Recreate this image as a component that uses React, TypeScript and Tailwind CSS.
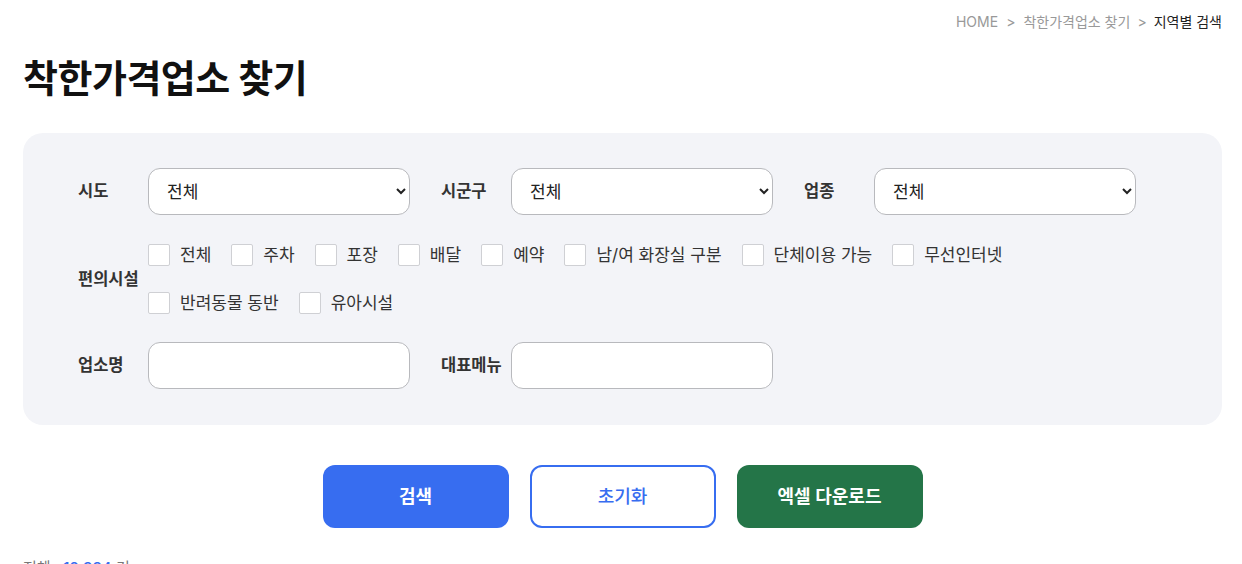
import React from 'react';

const row1 = ['전체', '주차', '포장', '배달', '예약', '남/여 화장실 구분', '단체이용 가능', '무선인터넷'];
const row2 = ['반려동물 동반', '유아시설'];

function Check({ label }: { label: string }) {
    return (
        <label className="flex items-center mr-[20px] h-[32px]">
            <input type="checkbox" className="appearance-none w-[22px] h-[22px] bg-white border border-[#cfd0d4] rounded-[2px]" />
            <span className="ml-[10px] text-[17px] leading-[24px] text-[#333]">{label}</span>
        </label>
    );
}

function SelectField({ label }: { label: string }) {
    return (
        <div className="flex items-center">
            <span className="w-[70px] text-[16.5px] font-semibold text-[#333]">{label}</span>
            <select className="w-[262px] h-[47px] bg-white border border-[#b8b9bd] rounded-[12px] pl-[14px] pr-[6px] text-[17px] text-[#222]">
                <option>전체</option>
            </select>
        </div>
    );
}

function InputField({ label }: { label: string }) {
    return (
        <div className="flex items-center">
            <span className="w-[70px] text-[16.5px] font-semibold text-[#333]">{label}</span>
            <input type="text" className="w-[262px] h-[47px] bg-white border border-[#b8b9bd] rounded-[12px] px-[18px] text-[17px]" />
        </div>
    );
}

export default function App() {
    return (
        <div className="w-[1242px] h-[564px] overflow-hidden bg-white pl-[23px] pr-[20px] font-['Inter','Noto_Sans_CJK_KR',sans-serif]">
            <div className="flex justify-end pt-[12px] text-[14px] leading-[20px] text-[#999]">
                <span>HOME</span>
                <span className="mx-[8px]">&gt;</span>
                <span>착한가격업소 찾기</span>
                <span className="mx-[7px]">&gt;</span>
                <span className="text-[#222]">지역별 검색</span>
            </div>

            <h1 className="mt-[22px] text-[38px] leading-[48px] font-bold text-[#111] tracking-[-0.5px]">착한가격업소 찾기</h1>

            <div className="mt-[31px] bg-[#f3f4f8] rounded-[20px] px-[55px] pt-[35px] pb-[36px]">
                <div className="flex gap-x-[31px]">
                    <SelectField label="시도" />
                    <SelectField label="시군구" />
                    <SelectField label="업종" />
                </div>

                <div className="flex items-center mt-[24px]">
                    <span className="w-[70px] text-[16.5px] font-semibold text-[#333]">편의시설</span>
                    <div className="flex flex-col gap-y-[16px]">
                        <div className="flex">
                            {row1.map(l => <Check key={l} label={l} />)}
                        </div>
                        <div className="flex">
                            {row2.map(l => <Check key={l} label={l} />)}
                        </div>
                    </div>
                </div>

                <div className="flex gap-x-[31px] mt-[23px]">
                    <InputField label="업소명" />
                    <InputField label="대표메뉴" />
                </div>
            </div>

            <div className="flex justify-center gap-x-[21px] mt-[40px]">
                <button className="w-[186px] h-[63px] rounded-[12px] bg-[#376df0] text-white text-[18px] font-semibold">검색</button>
                <button className="w-[186px] h-[63px] rounded-[12px] bg-white border-2 border-[#376df0] text-[#376df0] text-[18px] font-medium">초기화</button>
                <button className="w-[186px] h-[63px] rounded-[12px] bg-[#247548] text-white text-[18px] font-semibold">엑셀 다운로드</button>
            </div>

            <div className="mt-[29px] text-[15px] leading-[22px] text-[#777]">
                전체 : <span className="text-[#376df0] font-medium">12,334</span> 건
            </div>
        </div>
    );
}
